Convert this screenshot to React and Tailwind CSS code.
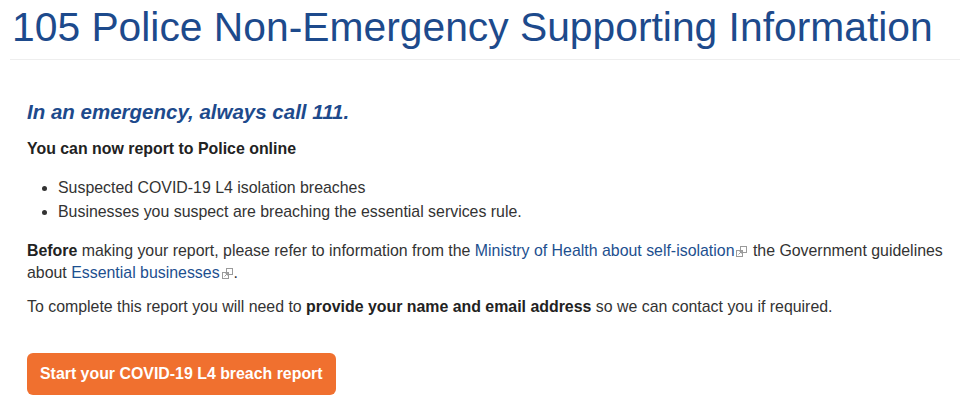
function ExtIcon() {
  return (
    <svg width="11" height="11" viewBox="0 0 11 11" className="ml-[2px] mr-[1px] inline-block align-[-1px]" fill="none" stroke="#9a9a9a" strokeWidth="1">
      <rect x="4.5" y="0.5" width="6" height="6" />
      <rect x="0.5" y="4.5" width="6" height="6" fill="#fff" />
      <path d="M2.5 8.5l3-3M3.5 5.5h2v2" />
    </svg>
  )
}

export default function App() {
  return (
    <div className="min-h-[412px] bg-white font-['Liberation_Sans',Arial,sans-serif] text-[15.9px] text-[#333]">
      <h1 className="mx-[10px] border-b border-[#eee] pb-[7px] pl-[2px] pt-[3px] text-[40.8px] leading-[49px] text-[#1d4a8c]">
        105 Police Non-Emergency Supporting Information
      </h1>
      <div className="pl-[27px] pr-[12px] pt-[38px]">
        <h2 className="text-[20.5px] font-bold italic leading-[28px] text-[#1d4a8c]">In an emergency, always call 111.</h2>
        <p className="mt-[13px] font-bold leading-[20px] text-[#222]">You can now report to Police online</p>
        <ul className="mt-[17px] list-disc pl-[31px] leading-[24px]">
          <li>Suspected COVID-19 L4 isolation breaches</li>
          <li>Businesses you suspect are breaching the essential services rule.</li>
        </ul>
        <p className="mt-[16px] leading-[22px]">
          <b className="text-[#222]">Before</b> making your report, please refer to information from the{' '}
          <a className="text-[#1d4f8f]">Ministry of Health about self-isolation</a>
          <ExtIcon /> the Government guidelines about <a className="text-[#1d4f8f]">Essential businesses</a>
          <ExtIcon />.
        </p>
        <p className="mt-[12px] leading-[22px]">
          To complete this report you will need to <b className="text-[#222]">provide your name and email address</b> so we can contact you if required.
        </p>
        <button className="mt-[35px] h-[42px] rounded-[6px] bg-[#f0702f] px-[13px] text-[15.9px] font-bold text-white">
          Start your COVID-19 L4 breach report
        </button>
      </div>
    </div>
  )
}
